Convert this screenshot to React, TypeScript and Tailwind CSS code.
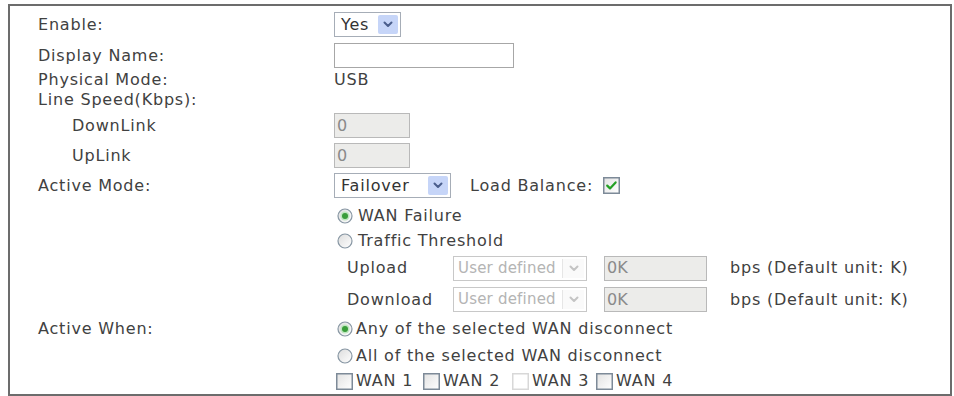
import React from "react";

const font = "font-['DejaVu_Sans',Verdana,sans-serif] text-[16px] tracking-[0.8px] text-[#414141]";

function Chevron({ color }: { color: string }) {
  return (
    <svg width="10" height="7" viewBox="0 0 10 7">
      <polyline points="1.5,1.5 5,5 8.5,1.5" fill="none" stroke={color} strokeWidth="2" strokeLinecap="round" strokeLinejoin="round" />
    </svg>
  );
}

function Select({ text, w, disabled }: { text: string; w: string; disabled?: boolean }) {
  return (
    <div
      className={`relative flex h-[25px] items-center bg-white ${w} ${
        disabled ? "border border-[#c8c8c8] text-[#b4b4b4]" : "border border-[#a6adb7] text-[#333333]"
      }`}
    >
      <span className={disabled ? "pl-[4px] text-[15px] tracking-[0.2px]" : "pl-[6px]"}>{text}</span>
      {disabled ? (
        <div className="absolute right-[2px] top-[2px] bottom-[2px] flex w-[22px] items-center justify-center border-l border-[#e6e6e6] bg-[#fafafa]">
          <Chevron color="#c4c4c4" />
        </div>
      ) : (
        <div className="absolute right-[2px] top-[2px] bottom-[2px] flex w-[20px] items-center justify-center rounded-[2px] bg-[#c6d5f8]">
          <Chevron color="#4a5e8c" />
        </div>
      )}
    </div>
  );
}

function TextBox({ value, w, disabled }: { value?: string; w: string; disabled?: boolean }) {
  return (
    <div
      className={`flex h-[25px] items-center ${w} ${
        disabled ? "border border-[#b9b9b9] bg-[#ececea] text-[#8a8a8a]" : "border border-[#a7a7a7] bg-white"
      }`}
    >
      <span className="pl-[2px] tracking-normal">{value}</span>
    </div>
  );
}

function Radio({ checked }: { checked?: boolean }) {
  return (
    <svg width="16" height="16" viewBox="0 0 16 16" className="shrink-0">
      <defs>
        <linearGradient id="rg" x1="0" y1="0" x2="1" y2="1">
          <stop offset="0" stopColor="#dcdcdc" />
          <stop offset="1" stopColor="#ffffff" />
        </linearGradient>
      </defs>
      <circle cx="8" cy="8" r="7" fill="url(#rg)" stroke="#8796a3" strokeWidth="1.2" />
      {checked && (
        <>
          <circle cx="8" cy="8" r="4.6" fill="#bfe6bf" />
          <circle cx="8" cy="8" r="3" fill="#3a9d3a" />
        </>
      )}
    </svg>
  );
}

function Check({ checked, disabled }: { checked?: boolean; disabled?: boolean }) {
  return (
    <svg width="17" height="17" viewBox="0 0 17 17" className="shrink-0">
      <defs>
        <linearGradient id="cg" x1="0" y1="0" x2="1" y2="1">
          <stop offset="0" stopColor="#e2e2e2" />
          <stop offset="1" stopColor="#ffffff" />
        </linearGradient>
      </defs>
      <rect
        x="0.75"
        y="0.75"
        width="15.5"
        height="15.5"
        fill={disabled ? "#ffffff" : "url(#cg)"}
        stroke={disabled ? "#d8d8d8" : "#7d8a98"}
        strokeWidth="1.5"
      />
      {checked && (
        <polyline points="4.2,8.6 7,11.4 12.6,5.4" fill="none" stroke="#24a024" strokeWidth="2.2" strokeLinecap="round" strokeLinejoin="round" />
      )}
    </svg>
  );
}

function Row({ h, label, indent, children }: { h: string; label?: string; indent?: boolean; children?: React.ReactNode }) {
  return (
    <div className={`flex items-center ${h}`}>
      <div className={`w-[296px] shrink-0 ${indent ? "pl-[34px]" : ""}`}>{label}</div>
      <div className="flex items-center">{children}</div>
    </div>
  );
}

export default function App() {
  return (
    <div className={`h-[396px] w-[954px] overflow-hidden bg-white ${font}`}>
      <div className="h-[4px]" />
      <div className="ml-[8px] h-[392px] w-[944px] border-2 border-[#6c6c6c] pt-[2px] pl-[28px]">
        <Row h="h-[33px]" label="Enable:">
          <Select text="Yes" w="w-[67px]" />
        </Row>
        <Row h="h-[29px]" label="Display Name:">
          <TextBox w="w-[180px]" />
        </Row>
        <Row h="h-[20px]" label="Physical Mode:">
          <span>USB</span>
        </Row>
        <Row h="h-[20px]" label="Line Speed(Kbps):" />
        <Row h="h-[31px]" label="DownLink" indent>
          <TextBox value="0" w="w-[76px]" disabled />
        </Row>
        <Row h="h-[29px]" label="UpLink" indent>
          <TextBox value="0" w="w-[76px]" disabled />
        </Row>
        <Row h="h-[31px]" label="Active Mode:">
          <Select text="Failover" w="w-[117px]" />
          <span className="ml-[19px]">Load Balance:</span>
          <span className="ml-[10px] flex">
            <Check checked />
          </span>
        </Row>
        <Row h="h-[30px]">
          <div className="ml-[3px] flex items-center gap-[5px]">
            <Radio checked />
            <span>WAN Failure</span>
          </div>
        </Row>
        <Row h="h-[20px]">
          <div className="ml-[3px] flex items-center gap-[5px]">
            <Radio />
            <span>Traffic Threshold</span>
          </div>
        </Row>
        <Row h="h-[34px]">
          <div className="ml-[13px] flex items-center">
            <span className="w-[106px]">Upload</span>
            <Select text="User defined" w="w-[134px]" disabled />
            <div className="ml-[17px]">
              <TextBox value="0K" w="w-[103px]" disabled />
            </div>
            <span className="ml-[23px]">bps (Default unit: K)</span>
          </div>
        </Row>
        <Row h="h-[29px]">
          <div className="ml-[13px] flex items-center">
            <span className="w-[106px]">Download</span>
            <Select text="User defined" w="w-[134px]" disabled />
            <div className="ml-[17px]">
              <TextBox value="0K" w="w-[103px]" disabled />
            </div>
            <span className="ml-[23px]">bps (Default unit: K)</span>
          </div>
        </Row>
        <Row h="h-[30px]" label="Active When:">
          <div className="ml-[3px] flex items-center gap-[3px]">
            <Radio checked />
            <span>Any of the selected WAN disconnect</span>
          </div>
        </Row>
        <Row h="h-[24px]">
          <div className="ml-[3px] flex items-center gap-[3px]">
            <Radio />
            <span>All of the selected WAN disconnect</span>
          </div>
        </Row>
        <Row h="h-[26px]">
          <div className="ml-[2px] flex items-center">
            <Check />
            <span className="ml-[3px] w-[67px]">WAN 1</span>
            <Check />
            <span className="ml-[3px] w-[69px]">WAN 2</span>
            <Check disabled />
            <span className="ml-[3px] w-[64px]">WAN 3</span>
            <Check />
            <span className="ml-[3px]">WAN 4</span>
          </div>
        </Row>
      </div>
    </div>
  );
}
